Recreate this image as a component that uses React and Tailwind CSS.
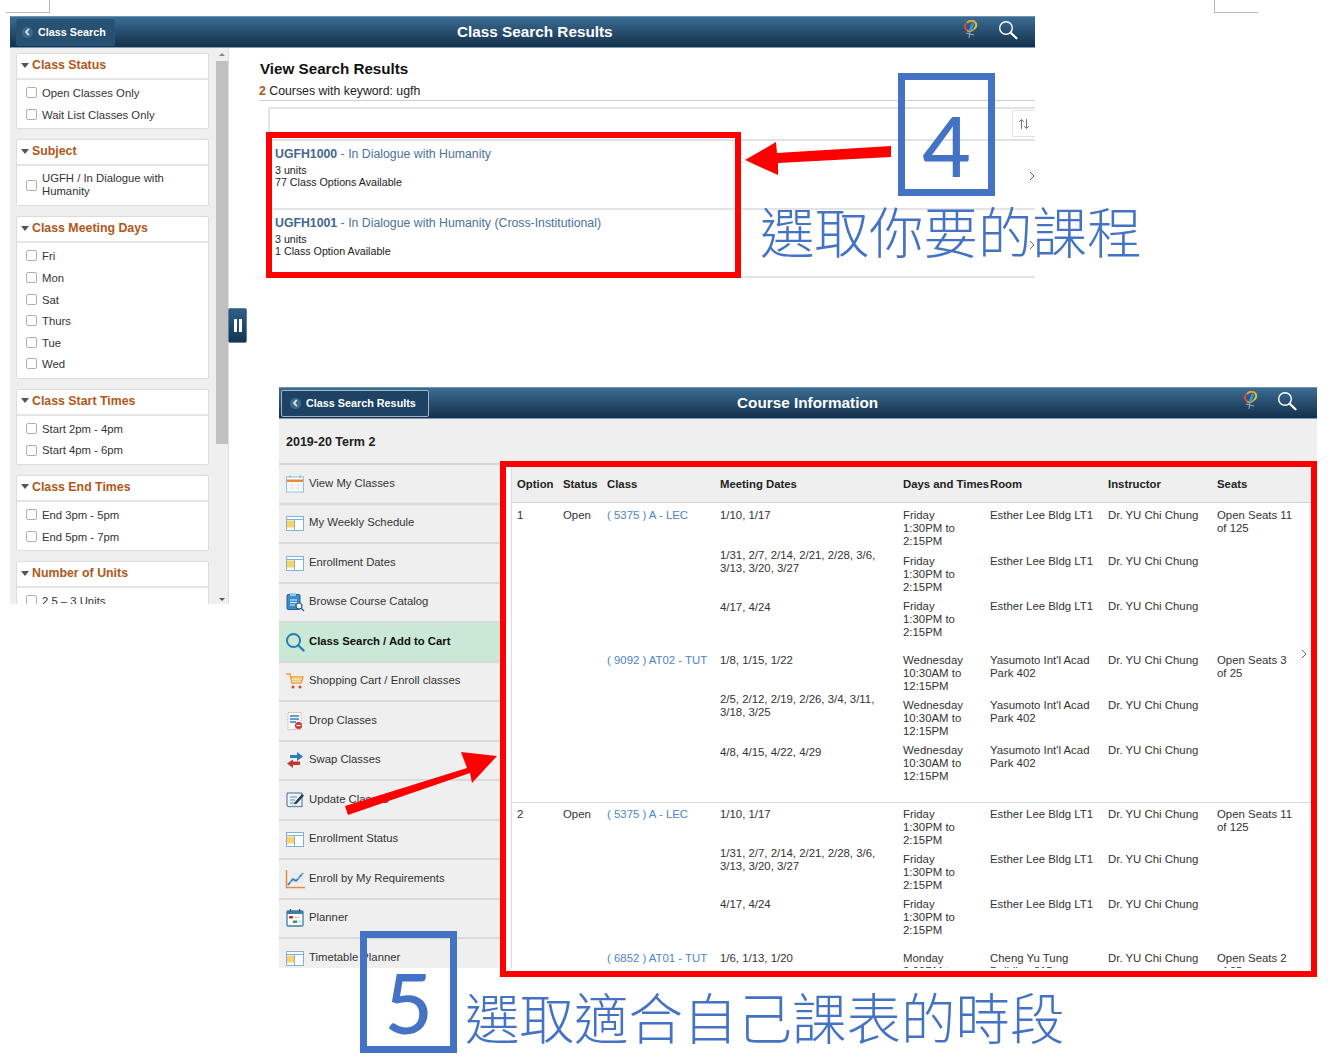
import React from "react";

const FONT = { fontFamily: '"Liberation Sans", Arial, sans-serif' };

function Logo() {
  return (
    <svg width="16" height="20" viewBox="0 0 16 20" fill="none">
      <path d="M4 3a5.5 5.5 0 0 1 8-1" stroke="#f0a030" strokeWidth="2" />
      <path d="M3 3.5c-1.5 2-1.5 4.500 1 7" stroke="#e0483a" strokeWidth="2" />
      <path d="M12 2c2 2 1.500 5-1 7" stroke="#e8c030" strokeWidth="2" />
      <path d="M4 10.500c2 1 5 1 7-1.500" stroke="#d9a030" strokeWidth="1.500" />
      <path d="M10 3 7 11" stroke="#3a9ad9" strokeWidth="2.500" />
      <path d="M7 11 6 18M3 13l8 2" stroke="#9db0c0" strokeWidth="1" />
    </svg>
  );
}

function SearchGlass() {
  return (
    <svg width="20" height="20" viewBox="0 0 20 20" fill="none">
      <circle cx="8" cy="8" r="6.300" stroke="#fff" strokeWidth="1.400" />
      <path d="M12.700 12.700 18.500 18.300" stroke="#fff" strokeWidth="2.200" strokeLinecap="round" />
    </svg>
  );
}

function Header({ label, title, boxed, btnClass, titleClass }) {
  return (
    <div className="h-[32px] shrink-0 flex items-center bg-gradient-to-b from-[#3c6d94] to-[#14304b] border-t border-t-[#6f93b0] border-b border-b-[#7c9dbd]">
      <div className={btnClass + " h-[27px] flex items-center rounded-[2px] " + (boxed ? "border border-[#a5b3c0] bg-[#1d4263]" : "border border-[#2a5475] bg-[#265173]")}>
        <span className="w-[11px] h-[11px] rounded-full bg-[#3c6b92] flex items-center justify-center">
          <svg width="7" height="8" viewBox="0 0 7 8" fill="none"><path d="M4.800 1 2 4l2.800 3" stroke="#fff" strokeWidth="1.500" /></svg>
        </span>
        <span className="ml-[5px] text-[10.800px] font-bold text-white leading-none">{label}</span>
      </div>
      <div className={titleClass + " text-[15.300px] font-bold text-white leading-none"}>{title}</div>
    </div>
  );
}

function Check() {
  return <span className="w-[11px] h-[11px] shrink-0 rounded-[2px] border border-[#b0b0b0] bg-white" />;
}

function Card({ title, items, tall }) {
  return (
    <div className="border border-[#dcdcdc] rounded-[2px] bg-white shrink-0">
      <div className="h-[26px] flex items-center pl-[4px] pb-[2px] border-b-2 border-[#e6e6e6]">
        <span className="w-0 h-0 border-x-[4px] border-x-transparent border-t-[5px] border-t-[#555]" />
        <span className="ml-[3px] text-[12.350px] font-bold text-[#b0581c] leading-none">{title}</span>
      </div>
      {tall ? (
        <div className="h-[39px] flex items-center pl-[9px]">
          <Check />
          <span className="ml-[5px] mb-[2px] text-[11.300px] leading-[13px] text-[#333] w-[130px]">{items[0]}</span>
        </div>
      ) : (
        <div className="pt-[3px] pb-[2px]">
          {items.map((t) => (
            <div key={t} className="h-[21.600px] flex items-center pl-[9px]">
              <span className="mb-[2px] flex"><Check /></span>
              <span className="ml-[5px] text-[11.300px] leading-none text-[#333]">{t}</span>
            </div>
          ))}
        </div>
      )}
    </div>
  );
}

function FilterSidebar() {
  return (
    <div className="w-[219px] h-[556px] overflow-hidden bg-[#efefef] flex border-r border-[#dedede]">
      <div className="w-[206px] pl-[6px] pr-[7px] pt-[5px] flex flex-col gap-[10px]">
        <Card title="Class Status" items={["Open Classes Only", "Wait List Classes Only"]} />
        <Card title="Subject" items={["UGFH / In Dialogue with Humanity"]} tall />
        <Card title="Class Meeting Days" items={["Fri", "Mon", "Sat", "Thurs", "Tue", "Wed"]} />
        <Card title="Class Start Times" items={["Start 2pm - 4pm", "Start 4pm - 6pm"]} />
        <Card title="Class End Times" items={["End 3pm - 5pm", "End 5pm - 7pm"]} />
        <Card title="Number of Units" items={["2.5 – 3 Units"]} />
      </div>
      <div className="w-[12px] flex flex-col items-center">
        <div className="h-[13px] flex items-center justify-center">
          <span className="w-0 h-0 border-x-[3px] border-x-transparent border-b-[3px] border-b-[#888]" />
        </div>
        <div className="w-[12px] h-[383px] bg-[#c1c1c1]" />
        <div className="flex-1 flex items-end pb-[3px]">
          <span className="w-0 h-0 border-x-[3px] border-x-transparent border-t-[3px] border-t-[#555]" />
        </div>
      </div>
    </div>
  );
}

function ResultRow({ code, name, options, h }) {
  return (
    <div className={h + " border-b-2 border-[#e4e4e4] pl-[7px] pt-[6px]"}>
      <div className="text-[12.300px] leading-[14px] text-[#4a7299]">
        <span className="font-bold text-[#3f6890]">{code}</span> - {name}
      </div>
      <div className="mt-[3px] text-[10.700px] leading-[12px] text-[#222]">3 units</div>
      <div className="text-[10.700px] leading-[12px] text-[#222]">{options}</div>
    </div>
  );
}

function Results() {
  return (
    <div className="flex-1 min-w-0 pl-[31px] pt-[11px]">
      <div className="text-[15.200px] font-bold leading-[20px] text-[#111]">View Search Results</div>
      <div className="mt-[4px] -ml-[1px] h-[18px] border-b border-[#cfcfcf] text-[12.300px] leading-[17px] text-[#222]">
        <span className="font-bold text-[#a85a20]">2</span> Courses with keyword: ugfh
      </div>
      <div className="ml-[8px] mt-[6px] h-[34px] border-l-2 border-t-2 border-b-2 border-[#e2e2e2] flex justify-end">
        <div className="w-[23px] h-[27px] mt-[1px] border border-r-0 border-[#e2e2e2] rounded-l-[2px] flex items-center justify-center">
          <svg width="12" height="12" viewBox="0 0 12 12" fill="none" stroke="#777" strokeWidth="1">
            <path d="M3.500 11V1.500M1 4l2.500-2.500L6 4M8.500 1v9.500M6 8l2.500 2.500L11 8" />
          </svg>
        </div>
      </div>
      <div className="ml-[8px]">
        <ResultRow code="UGFH1000" name="In Dialogue with Humanity" options="77 Class Options Available" h="h-[69px]" />
        <ResultRow code="UGFH1001" name="In Dialogue with Humanity (Cross-Institutional)" options="1 Class Option Available" h="h-[68px]" />
      </div>
    </div>
  );
}

function Ic({ children }) {
  return <svg width="20" height="20" viewBox="0 0 20 20" fill="none">{children}</svg>;
}

const TableIcon = ({ y = "#f7d36b" }) => (
  <Ic>
    <rect x="1.500" y="3.500" width="17" height="14" fill="#fff" stroke="#7fb2d9" />
    <path d="M1.500 6.500h17M9.500 6.500v11" stroke="#7fb2d9" />
    <rect x="2" y="7.500" width="7" height="7" fill={y} />
  </Ic>
);

const icons = {
  cal: (
    <Ic>
      <rect x="1.500" y="3" width="17" height="15" fill="#fff" stroke="#8cc0e4" />
      <rect x="2" y="5.500" width="16" height="2.500" fill="#e88a35" />
      <path d="M2 11h16M2 14h16M7 8v10M13 8v10" stroke="#e4e4e4" />
      <path d="M5 1.500v2M15 1.500v2" stroke="#5a9bd0" />
    </Ic>
  ),
  table: <TableIcon />,
  cat: (
    <Ic>
      <rect x="2" y="2.500" width="13" height="15" rx="1" fill="#3d8ccb" stroke="#275f8f" />
      <rect x="5" y="1" width="6" height="3" fill="#9cc6e6" />
      <path d="M5 8h7M5 10.500h7M5 13h5" stroke="#e3f0fa" />
      <circle cx="14" cy="14" r="3" fill="#fff" stroke="#275f8f" strokeWidth="1.200" />
      <path d="m16 16 3 3" stroke="#275f8f" strokeWidth="1.300" />
    </Ic>
  ),
  search: (
    <Ic>
      <circle cx="8.500" cy="8.500" r="6.500" stroke="#2a7ab8" strokeWidth="2" />
      <path d="m13.500 13.500 5 5" stroke="#2a7ab8" strokeWidth="2.400" strokeLinecap="round" />
    </Ic>
  ),
  cart: (
    <Ic>
      <path d="M1 3h4l2 9h9l2-6H6" stroke="#e9a13a" strokeWidth="1.500" />
      <path d="M7 7h10M8 9.500h8M9 6v6M12 6v6M15 6v6" stroke="#f3c36f" />
      <circle cx="8" cy="16" r="1.500" fill="#d0492f" />
      <circle cx="15" cy="16" r="1.500" fill="#d0492f" />
    </Ic>
  ),
  drop: (
    <Ic>
      <rect x="3" y="1.500" width="13" height="17" fill="#fff" stroke="#e0a0a0" strokeDasharray="1.500 1" />
      <path d="M5 5h9M5 8h9M5 11h6" stroke="#2c7ebc" strokeWidth="1.500" />
      <circle cx="13.500" cy="14.500" r="3.500" fill="#c9352b" />
      <path d="M11.500 14.500h4" stroke="#fff" strokeWidth="1.300" />
    </Ic>
  ),
  swap: (
    <Ic>
      <path d="M5 5h7V2l6 4.500-6 4.500V8H5z" fill="#2c7ebc" />
      <path d="M15 11.500H8v-2L2 13.500l6 4.500v-3h7z" fill="#c0392b" />
    </Ic>
  ),
  update: (
    <Ic>
      <path d="M2 3h15v14l-2-1-2 1-2-1-2 1-2-1-2 1-3-1z" fill="#eef5fb" stroke="#456d93" />
      <path d="M5 7h7M5 10h5M5 13h7" stroke="#7fb2d9" strokeWidth="1.300" />
      <path d="m10 12 7-8 2 1.500-7 8-3 1z" fill="#2a3a4a" />
    </Ic>
  ),
  chart: (
    <Ic>
      <path d="M1.500 1v17.500H20" stroke="#e88a45" strokeWidth="1.500" />
      <path d="m3 16 5-6 3 2 7-8" stroke="#2c7ebc" strokeWidth="1.800" />
      <path d="M5 5h13M5 9h13M5 13h13" stroke="#e2e2e2" strokeWidth=".7" />
    </Ic>
  ),
  plan: (
    <Ic>
      <rect x="2" y="3" width="16" height="15" rx="1" fill="#fff" stroke="#3c7ea8" strokeWidth="1.300" />
      <rect x="2" y="3" width="16" height="3" fill="#3c7ea8" />
      <path d="M5.500 1v3M14.500 1v3" stroke="#2a5f82" strokeWidth="1.300" />
      <rect x="4" y="8" width="4" height="2.500" fill="#c9352b" />
      <path d="M9 9.300h6" stroke="#bbb" />
      <rect x="8" y="12.500" width="4" height="2.500" fill="#2f9a66" />
      <path d="M13 13.800h3" stroke="#bbb" />
    </Ic>
  ),
};

const NAV = [
  ["cal", "View My Classes"],
  ["table", "My Weekly Schedule"],
  ["table", "Enrollment Dates"],
  ["cat", "Browse Course Catalog"],
  ["search", "Class Search / Add to Cart", true],
  ["cart", "Shopping Cart / Enroll classes"],
  ["drop", "Drop Classes"],
  ["swap", "Swap Classes"],
  ["update", "Update Classes"],
  ["table", "Enrollment Status"],
  ["chart", "Enroll by My Requirements"],
  ["plan", "Planner"],
  ["table", "Timetable Planner"],
];

function Nav() {
  return (
    <div className="w-[221px] shrink-0 border-t-2 border-[#d6d6d6]">
      {NAV.map(([ic, label, active]) => (
        <div
          key={label}
          className={"h-[39.500px] flex items-center pl-[6px] border-b-2 border-[#d9d9d9] " + (active ? "bg-[#c9e8d5]" : "bg-[#efefef]")}
        >
          <span className="flex w-[20px] h-[20px]">{icons[ic]}</span>
          <span className={"ml-[4px] text-[11.300px] leading-none mb-[1px] " + (active ? "font-bold text-[#111]" : "text-[#333]")}>{label}</span>
        </div>
      ))}
    </div>
  );
}

const COLS = "grid grid-cols-[51px_44px_113px_183px_87px_118px_109px_94px]";

const FRI = ["Friday", "1:30PM to", "2:15PM"];
const WED = ["Wednesday", "10:30AM to", "12:15PM"];
const ESTHER = ["Esther Lee Bldg LT1"];
const YASU = ["Yasumoto Int'l Acad", "Park 402"];
const DR = "Dr. YU Chi Chung";
const D1 = ["1/31, 2/7, 2/14, 2/21, 2/28, 3/6,", "3/13, 3/20, 3/27"];
const D2 = ["2/5, 2/12, 2/19, 2/26, 3/4, 3/11,", "3/18, 3/25"];

const ROWS = [
  { h: "h-[46px] pt-[6px]", opt: "1", st: "Open", cls: "( 5375 ) A - LEC", d: ["1/10, 1/17"], dc: "", days: FRI, room: ESTHER, seats: ["Open Seats 11", "of 125"] },
  { h: "h-[45px] pt-[6px]", d: D1, dc: "-mt-[6px]", days: FRI, room: ESTHER },
  { h: "h-[54px] pt-[6px]", d: ["4/17, 4/24"], dc: "mt-[1px]", days: FRI, room: ESTHER },
  { h: "h-[45px] pt-[6px]", cls: "( 9092 ) AT02 - TUT", d: ["1/8, 1/15, 1/22"], dc: "", days: WED, room: YASU, seats: ["Open Seats 3", "of 25"] },
  { h: "h-[45px] pt-[6px]", d: D2, dc: "-mt-[6px]", days: WED, room: YASU },
  { h: "h-[64px] pt-[6px]", d: ["4/8, 4/15, 4/22, 4/29"], dc: "mt-[2px]", days: WED, room: YASU },
  { h: "h-[45px] pt-[5px] border-t border-[#d9d9d9]", opt: "2", st: "Open", cls: "( 5375 ) A - LEC", d: ["1/10, 1/17"], dc: "", days: FRI, room: ESTHER, seats: ["Open Seats 11", "of 125"] },
  { h: "h-[45px] pt-[6px]", d: D1, dc: "-mt-[6px]", days: FRI, room: ESTHER },
  { h: "h-[54px] pt-[6px]", d: ["4/17, 4/24"], dc: "", days: FRI, room: ESTHER },
  { h: "h-[45px] pt-[6px]", cls: "( 6852 ) AT01 - TUT", d: ["1/6, 1/13, 1/20"], dc: "", days: ["Monday", "3:00PM to", "4:45PM"], room: ["Cheng Yu Tung", "Building 315"], seats: ["Open Seats 2", "of 25"] },
];

function Lines({ items }) {
  return (
    <div>
      {(items || []).map((t) => (
        <div key={t}>{t}</div>
      ))}
    </div>
  );
}

function Table() {
  return (
    <div className="flex-1 min-w-0 flex overflow-hidden">
      <div className="w-[12px] shrink-0 border-r border-[#dcdcdc]" />
      <div className="flex-1 min-w-0 relative">
        <div className={COLS + " h-[40px] pt-[2px] bg-[#efefef] border-b border-[#d4d4d4] border-t border-t-[#d9d9d9] items-center text-[11.350px] leading-[13px] font-bold text-[#222]"}>
          <div className="pl-[5px]">Option</div>
          <div>Status</div>
          <div>Class</div>
          <div>Meeting Dates</div>
          <div>Days and Times</div>
          <div>Room</div>
          <div>Instructor</div>
          <div>Seats</div>
        </div>
        {ROWS.map((r, i) => (
          <div key={i} className={COLS + " text-[11.400px] leading-[13px] text-[#333] " + r.h}>
            <div className="pl-[5px]">{r.opt}</div>
            <div>{r.st}</div>
            <div className="text-[#4f82cc]">{r.cls}</div>
            <div className={r.dc}><Lines items={r.d} /></div>
            <Lines items={r.days} />
            <Lines items={r.room} />
            <div>{r.days ? DR : ""}</div>
            <Lines items={r.seats} />
          </div>
        ))}
        <svg className="absolute left-[788px] top-[186px]" width="8" height="10" viewBox="0 0 8 10" fill="none" stroke="#666">
          <path d="m2 1 4 4-4 4" />
        </svg>
      </div>
    </div>
  );
}

function NumberBox({ n, cls }) {
  return (
    <div className={"absolute w-[97px] border-[7px] border-[#4472c4] flex items-center justify-center text-[#4472c4] leading-none text-[84px] font-medium " + cls} style={{ fontFamily: 'Lato, sans-serif' }}>
      <span className="mt-[20px]">{n}</span>
    </div>
  );
}

const CJK = { fontFamily: '"Noto Sans CJK TC", sans-serif' };

export default function App() {
  return (
    <div className="relative w-[1334px] h-[1057px] overflow-hidden bg-white" style={FONT}>
      {/* page corner marks */}
      <div className="absolute left-[6px] top-0 w-[44px] h-[13px] border-r border-b border-[#b8b8b8]" />
      <div className="absolute left-[1214px] top-0 w-[44px] h-[13px] border-l border-b border-[#b8b8b8]" />

      {/* Window 1 */}
      <div className="absolute left-[10px] top-[16px] w-[1025px] flex flex-col">
        <Header label="Class Search" title="Class Search Results" btnClass="ml-[6px] w-[99px] pl-[5px]" titleClass="ml-[342px]" />
        <div className="flex">
          <FilterSidebar />
          <Results />
        </div>
        <div className="absolute left-[218px] top-[292px] w-[19px] h-[35px] rounded-[2px] bg-gradient-to-b from-[#2f5f88] to-[#143552] border border-[#5f7f9c] flex items-center justify-center gap-[2px]">
          <span className="w-[3px] h-[13px] bg-white" />
          <span className="w-[3px] h-[13px] bg-white" />
        </div>
        <div className="absolute left-[953px] top-[4px]"><Logo /></div>
        <div className="absolute left-[988px] top-[4px]"><SearchGlass /></div>
        <svg className="absolute left-[1019px] top-[155px]" width="6" height="10" viewBox="0 0 6 10" fill="none" stroke="#666"><path d="m1 1 4 4-4 4" /></svg>
        <svg className="absolute left-[1019px] top-[224px]" width="6" height="10" viewBox="0 0 6 10" fill="none" stroke="#666"><path d="m1 1 4 4-4 4" /></svg>
      </div>

      {/* Window 2 */}
      <div className="absolute left-[279px] top-[387px] w-[1038px] h-[581px] overflow-hidden flex flex-col bg-white">
        <Header label="Class Search Results" title="Course Information" boxed btnClass="ml-[2px] w-[148px] pl-[8px]" titleClass="ml-[308px]" />
        <div className="h-[44px] shrink-0 bg-[#efefef] flex items-center pl-[7px] pt-[2px] text-[12.500px] font-bold text-[#222]">2019-20 Term 2</div>
        <div className="flex flex-1 min-h-0">
          <Nav />
          <Table />
        </div>
        <div className="absolute left-[964px] top-[4px]"><Logo /></div>
        <div className="absolute left-[998px] top-[4px]"><SearchGlass /></div>
      </div>

      {/* Annotations */}
      <div className="absolute left-[266px] top-[132px] w-[475px] h-[146px] border-[6px] border-[#ff0000]" />
      <div className="absolute left-[500px] top-[461px] w-[817px] h-[516px] border-[6px] border-[#ff0000]" />
      <svg className="absolute left-[740px] top-[135px]" width="160" height="45" viewBox="740 135 160 45">
        <polygon points="745,160 776,142 777,153 891,146 891,157 778,163 778,175" fill="#ff0000" />
      </svg>
      <svg className="absolute left-[340px] top-[745px]" width="160" height="75" viewBox="340 745 160 75">
        <polygon points="497,756 461,752 467,768 345,806 348,815 470,773 472,783" fill="#ff0000" />
      </svg>
      <NumberBox n="4" cls="left-[898px] top-[73px] h-[123px]" />
      <NumberBox n="5" cls="left-[360px] top-[931px] h-[122px]" />
      <div className="absolute left-[760px] top-[194px] text-[54.500px] font-light leading-[72px] text-[#4472c4] whitespace-nowrap" style={CJK}>選取你要的課程</div>
      <div className="absolute left-[465px] top-[980px] text-[54.500px] font-light leading-[72px] text-[#4472c4] whitespace-nowrap" style={CJK}>選取適合自己課表的時段</div>
    </div>
  );
}
